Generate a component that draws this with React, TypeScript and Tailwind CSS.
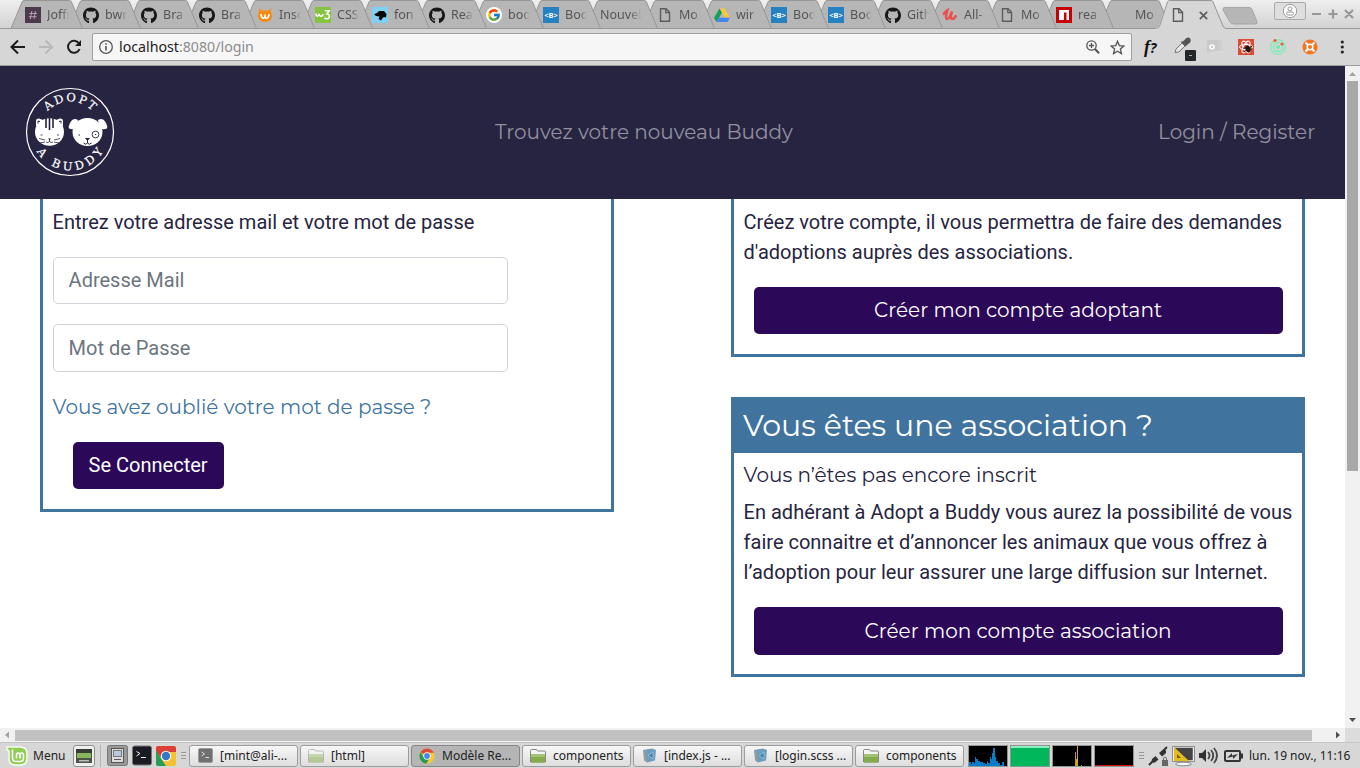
import type { ReactNode } from "react";
import { FaGithub } from "react-icons/fa";
import { FcGoogle } from "react-icons/fc";

const NOTO = "font-['Noto_Sans',sans-serif]";
const GEO = "font-['Montserrat','Inter',sans-serif] font-normal";

function PageIcon() {
  return (
    <svg width="12" height="16" viewBox="0 0 12 16" fill="none" stroke="#5c5c5c" strokeWidth="1.4">
      <path d="M1.5 1.7h5.6l3.4 3.6v8.9h-9z" />
      <path d="M6.8 1.9v3.7h3.6" />
    </svg>
  );
}

function Chrome({ size }: { size: number }) {
  return (
    <svg width={size} height={size} viewBox="0 0 20 20">
      <circle cx="10" cy="10" r="9.5" fill="#fbc82e" />
      <path d="M10 10 1.8 5.2A9.5 9.5 0 0 1 18.2 5.2L18.5 6H10z" fill="#dd4b3e" />
      <path d="M1.8 5.2A9.5 9.5 0 0 0 9.3 19.5L13.5 12 10 10 6.5 12z" fill="#26995a" />
      <circle cx="10" cy="10" r="4.6" fill="#fff" />
      <circle cx="10" cy="10" r="3.6" fill="#4688ee" />
    </svg>
  );
}

const Gh = () => <FaGithub size={17} color="#171717" />;
const Boot = () => (
  <svg width="16" height="16" viewBox="0 0 16 16">
    <rect width="16" height="16" fill="#2581c1" />
    <text x="8" y="10.8" fontFamily="Noto Sans" fontWeight="700" fontSize="7.5" fill="#fff" textAnchor="middle">&lt;B&gt;</text>
  </svg>
);
const Slack = () => (
  <svg width="16" height="16" viewBox="0 0 16 16">
    <rect width="16" height="16" fill="#4d394b" />
    <path d="M6.8 4 5.4 12M10.4 4 9 12M4.2 6.4h7.8M3.8 9.7h7.8" stroke="#b59fb3" strokeWidth="1" />
  </svg>
);
const Cat = () => (
  <svg width="16" height="16" viewBox="0 0 16 16">
    <path d="M2 1.500 5 3.500h6l3-2v3l1 4c0 4-3 6.500-7 6.500S1 12.500 1 8.500l1-4z" fill="#f58a15" />
    <path d="M4 7c0 5 3.500 5 4 2.500 0 2.500 4 2.500 4-2.500M8 7.500v2" fill="none" stroke="#fff" strokeWidth="1.500" />
  </svg>
);
const W3 = () => (
  <svg width="16" height="16" viewBox="0 0 16 16">
    <rect width="16" height="16" fill="#86c440" />
    <path d="M.8 6.500c.6 3.500 2.500 3.500 3.300.4.5 3 2.500 3.500 4.200.2M9.700 3.700h4.500L11.800 7c3.500 0 3.400 5-.2 4.700-1 0-1.700-.4-2.200-1" fill="none" stroke="#fff" strokeWidth="1.500" />
  </svg>
);
const Hound = () => (
  <svg width="16" height="16" viewBox="0 0 16 16">
    <rect width="16" height="16" fill="#7fd0f3" />
    <path d="M2 7.200 5 6l2-2h5l2.500 3-.5 3.500-2-.5-1.500 1L9 13.500l-2.500-1.500 1-2.500L4 9z" fill="#050505" />
  </svg>
);
const Google = () => (
  <span className="flex size-4 items-center justify-center rounded-full bg-white">
    <FcGoogle size={14} />
  </span>
);
const Drive = () => (
  <svg width="16" height="16" viewBox="0 0 16 16">
    <path d="M5.500 1.500h5L16 10.500h-5z" fill="#fdc73c" />
    <path d="M5.500 1.500 0 10.700 2.500 15 8 5.800z" fill="#15a05c" />
    <path d="M5.300 10.700H16L13.500 15h-11z" fill="#4387f5" />
  </svg>
);
const Udemy = () => (
  <svg width="16" height="16" viewBox="0 0 16 16">
    <path d="M1 7.500C3 6 4 4 5.500 3.200 4.500 6.500 2.800 12 5.200 12c2.300 0 3.600-5 4.800-7.500-1 3.500-2 7.500.2 7.500 1.600 0 3-1.700 4-3.800" fill="none" stroke="#ea5252" strokeWidth="2.500" />
  </svg>
);
const Npm = () => (
  <svg width="16" height="16" viewBox="0 0 16 16">
    <rect width="16" height="16" fill="#c80000" />
    <path d="M3 3h10v10h-2.500V5.500H8V13H3z" fill="#fff" />
  </svg>
);

const tabs: { icon: ReactNode; label: string }[] = [
  { icon: <Slack />, label: "Joffr" },
  { icon: <Gh />, label: "bwr" },
  { icon: <Gh />, label: "Bra" },
  { icon: <Gh />, label: "Bra" },
  { icon: <Cat />, label: "Inso" },
  { icon: <W3 />, label: "CSS" },
  { icon: <Hound />, label: "fon" },
  { icon: <Gh />, label: "Rea" },
  { icon: <Google />, label: "boo" },
  { icon: <Boot />, label: "Boo" },
  { icon: null, label: "Nouvel" },
  { icon: <PageIcon />, label: "Mo" },
  { icon: <Drive />, label: "wir" },
  { icon: <Boot />, label: "Boo" },
  { icon: <Boot />, label: "Boo" },
  { icon: <Gh />, label: "Gith" },
  { icon: <Udemy />, label: "All-" },
  { icon: <PageIcon />, label: "Mo" },
  { icon: <Npm />, label: "rea" },
  { icon: <span className="size-4" />, label: "Mo" },
];

function TabStrip() {
  return (
    <div className="flex h-[29px] shrink-0 bg-linear-to-b from-[#efefef] to-[#d2d2d2] pl-[11px]">
      {tabs.map((t, i) => (
        <div key={i} className={"relative h-[29px] shrink-0 " + (i < 5 ? "w-[58px]" : "w-[57px]")} style={{ zIndex: 30 - i }}>
          <svg className="absolute top-0 left-0" width="73" height="29" viewBox="0 0 73 29">
            <path d="M0 28.500 11 2q.7-1.500 2-1.500H58.500q1.500 0 2 1.500L71.500 28.500z" fill="#b6b6b6" stroke="#979797" />
          </svg>
          <div className="relative flex h-[29px] w-[57px] items-center gap-[6px] pt-px pl-[14px] text-[12.5px] text-[#555]">
            {t.icon && <span className="flex h-4 w-4 shrink-0 items-center justify-center">{t.icon}</span>}
            <span
              className={
                (t.icon ? "w-[22px] [mask-image:linear-gradient(to_right,black_65%,transparent)]" : "w-[42px] [mask-image:linear-gradient(to_right,black_70%,transparent)]") +
                " shrink-0 whitespace-nowrap"
              }
            >
              {t.label}
            </span>
          </div>
        </div>
      ))}
      <div className="relative z-40 h-[29px] w-[70px] shrink-0">
        <svg className="absolute top-0 left-0" width="72" height="29" viewBox="0 0 72 29">
          <path d="M0 29 0 28.500Q2 28 3 25L11.500 2q.7-1.500 2-1.500H55q1.500 0 2 1.500L67 26q1 2.500 3.500 2.500V29z" fill="#d6d6d6" />
          <path d="M1 28.500Q3 28 4 25L11.500 2q.7-1.500 2-1.500H55q1.500 0 2 1.500L67 26q1 2.500 3.500 2.500" fill="none" stroke="#979797" />
        </svg>
        <div className="relative flex h-[29px] items-center gap-[15px] pt-px pl-[16px]">
          <PageIcon />
          <svg width="9" height="9" viewBox="0 0 9 9" stroke="#5c5c5c" strokeWidth="1.700">
            <path d="M.8.8l7.400 7.400M8.200.8.8 8.200" />
          </svg>
        </div>
      </div>
      <svg className="-ml-[4px] shrink-0" width="36" height="29" viewBox="0 0 36 29">
        <path d="M2 7.500h25q2 0 3 2l5 12q.5 2.500-1.500 2.500H12q-3 0-4-2L1 10q-.5-2 1-2.500z" fill="#b6b6b6" stroke="#a5a5a5" />
      </svg>
      <div className="mt-[2px] ml-[16px] flex h-[18px] w-[32px] shrink-0 items-center justify-center rounded-[2px] border border-[#aaa] bg-[#dedede]">
        <svg width="16" height="16" viewBox="0 0 16 16" fill="#fff" stroke="#999">
          <circle cx="8" cy="8" r="6.700" />
          <circle cx="8" cy="5.800" r="2" />
          <rect x="4.500" y="9" width="7" height="3" rx="1.500" />
        </svg>
      </div>
      <svg className="mt-[8px] ml-[6px] shrink-0" width="44" height="12" viewBox="0 0 44 12" stroke="#989898" strokeWidth="2.200">
        <path d="M0 6h9M16.500 6h9M21 1.500v9M33 2l8 8M41 2l-8 8" />
      </svg>
    </div>
  );
}

function Toolbar() {
  return (
    <div className="relative z-0 -mt-px flex h-[38px] shrink-0 items-center border-y border-t-[#979797] border-b-[#9d9d9d] bg-[#d6d6d6]">
      <svg width="92" height="36" viewBox="0 0 92 36" fill="none" strokeWidth="2">
        <path d="M25 18H12M18 11.500 11.500 18l6.500 6.500" stroke="#1c1c1c" />
        <path d="M39 18h13M45.500 11.500 52 18l-6.500 6.500" stroke="#b9b9b9" />
        <path d="M79 14.500A6 6 0 1 0 79.600 20" stroke="#1c1c1c" />
        <path d="M81 11v6h-6z" fill="#1c1c1c" />
      </svg>
      <div className="flex h-[28px] w-[1040px] shrink-0 items-center rounded-[2px] border border-[#a0a0a0] bg-[#f6f6f6] pl-[6px]">
        <svg width="14" height="14" viewBox="0 0 14 14" fill="none" stroke="#555" strokeWidth="1.300">
          <circle cx="7" cy="7" r="6.300" />
          <path d="M7 6v4.500M7 3.200v1.500" strokeWidth="1.600" />
        </svg>
        <span className="ml-[6px] flex-1 text-[14.200px] text-[#8c8c8c]">
          <span className="text-[#222]">localhost</span>:8080/login
        </span>
        <svg className="mr-[10px]" width="42" height="16" viewBox="0 0 42 16" fill="none" stroke="#555" strokeWidth="1.300">
          <circle cx="6.500" cy="6.500" r="4.700" />
          <path d="M4 6.500h5M6.500 4v5" />
          <path d="m10 10 4 4.200" strokeWidth="2" />
        </svg>
        <svg className="-ml-[27px] mr-[6px]" width="15" height="15" viewBox="0 0 15 15" fill="none" stroke="#555" strokeWidth="1.300">
          <path d="m7.500 1.300 1.800 4.300 4.600.4-3.500 3.100 1 4.500-3.900-2.400-3.900 2.400 1-4.500L1.100 6l4.600-.4z" />
        </svg>
      </div>
      <span className="ml-[12px] w-[24px] shrink-0 font-['Liberation_Serif',serif] text-[18px] leading-none font-bold text-[#111] italic">
        f<span className="font-['Noto_Sans',sans-serif] text-[14px]">?</span>
      </span>
      <svg className="ml-[6px] shrink-0" width="186" height="30" viewBox="0 0 186 30">
        <path d="M1 20.500 2 17l6-6 3 3-6 6z" fill="#e6e6e6" stroke="#777" />
        <path d="m7.500 9.500 4.500 4.500M9 10.500l3.500-3.500q2-1.500 3 0t0 3L12 13" fill="#555" stroke="#555" strokeWidth="1.600" />
        <rect x="11" y="18" width="11" height="11" rx="1" fill="#22272c" />
        <path d="M15 23.500h3" stroke="#aaa" />
        <path d="M33 10q0-2 2-2h8q2 0 2 2v7q0 2-2 2h-7l-3 2z" fill="#c9c9c9" />
        <path d="M44 8h4v11l-3-1" fill="#cfcfcf" />
        <circle cx="38" cy="15" r="2" fill="none" stroke="#fff" strokeWidth="1.500" />
        <rect x="64" y="7" width="16" height="16" fill="#dc4a38" />
        <g fill="none" stroke="#fff">
          <ellipse cx="72" cy="15" rx="6.500" ry="2.600" />
          <ellipse cx="72" cy="15" rx="6.500" ry="2.600" transform="rotate(60 72 15)" />
          <ellipse cx="72" cy="15" rx="6.500" ry="2.600" transform="rotate(120 72 15)" />
        </g>
        <ellipse cx="74" cy="17" rx="2.500" ry="3.500" fill="#241511" transform="rotate(-25 74 17)" />
        <path d="m69 16 9 1M70 20l8-6" stroke="#241511" />
        <g fill="none" stroke="#78efb3" strokeWidth="1.300">
          <circle cx="104" cy="15" r="7.300" />
          <circle cx="104" cy="15" r="4.500" />
        </g>
        <circle cx="104" cy="15" r="2" fill="#66eda6" />
        <circle cx="101" cy="8.500" r="1.600" fill="#f65b36" />
        <circle cx="108" cy="12" r="1.600" fill="#f65b36" />
        <circle cx="136" cy="15" r="7.600" fill="#f47521" />
        <path d="m131.500 10.500 9 9M140.500 10.500l-9 9" stroke="#fff" strokeWidth="2.200" />
        <circle cx="136" cy="15" r="2.800" fill="#f47521" stroke="#fff" strokeWidth="1.500" />
        <g fill="#222">
          <circle cx="168.300" cy="10" r="1.600" />
          <circle cx="168.300" cy="15" r="1.600" />
          <circle cx="168.300" cy="20" r="1.600" />
        </g>
      </svg>
    </div>
  );
}

function Logo() {
  return (
    <svg width="90" height="90" viewBox="0 0 90 90" className="-mt-[2px] shrink-0">
      <defs>
        <path id="arc-top" d="M14.500 45a30.500 30.500 0 0 1 61 0" />
        <path id="arc-bottom" d="M6.500 45a38.500 38.500 0 0 0 77 0" />
      </defs>
      <circle cx="45" cy="45" r="43.500" fill="none" stroke="#fff" strokeWidth="1.200" />
      <g fontFamily="DejaVu Serif" fontSize="11.500" fill="#fff" stroke="#fff" strokeWidth=".2">
        <text textAnchor="middle" textLength="50">
          <textPath href="#arc-top" startOffset="50%">ADOPT</textPath>
        </text>
        <text textAnchor="middle" textLength="80">
          <textPath href="#arc-bottom" startOffset="50%">A BUDDY</textPath>
        </text>
      </g>
      <path d="M11 39V34q0-3 3-2.500l4 1.500h13l4-1.500q3-.5 3 2.500v5" fill="#fff" />
      <ellipse cx="24.500" cy="45" rx="14.500" ry="13.700" fill="#fff" />
      <path d="M13 36.500V34l2 .5M36 36.500V34l-2 .5" stroke="#272441" fill="none" />
      <path d="M21 31v10M24.500 31v12M28 31v10" stroke="#272441" strokeWidth="1.600" />
      <g stroke="#272441" strokeWidth=".8" fill="none">
        <path d="M15.500 48h2M32 48h2M24.500 52v3M21 55q2 1.500 3.500-.5 1.500 2 3.500.5M20 53l-6-1.500M20 55l-5 1M29 53l6-1.500M29 55l5 1" />
      </g>
      <path d="M23 51.500h3l-1.500 1.800z" fill="#272441" />
      <path d="M53 33q-5-3-8 3t1 6q4 1 6-4zM73 33q5-3 8 3t-1 6q-4 1-6-4z" fill="#fff" />
      <ellipse cx="62.500" cy="45" rx="15" ry="14" fill="#fff" />
      <circle cx="70.500" cy="47.500" r="3.400" fill="none" stroke="#272441" strokeWidth=".9" />
      <path d="M70 47.500h1.200M53.500 48h1.500M62.500 52v4M58.500 56q2.500 2.500 4 0 1.500 2.500 4 0" stroke="#272441" fill="none" />
      <path d="M60 51h5l-2.500 3z" fill="#272441" />
    </svg>
  );
}

function Page() {
  return (
    <div className="flex h-[662px] w-[1345px] flex-col overflow-hidden bg-white font-['Roboto',sans-serif] text-[20px] leading-[30px] text-[#272441]">
      <header className={`${GEO} flex h-[133px] shrink-0 items-center bg-[#272441] pl-[25px] text-[#93919f]`}>
        <Logo />
        <span className="-mt-[2px] ml-[380px] w-[663px] whitespace-nowrap">Trouvez votre nouveau Buddy</span>
        <span className="-mt-[2px] whitespace-nowrap">Login / Register</span>
      </header>
      <main className="flex items-start justify-between pr-[40px] pl-[40px]">
        <section className="h-[313px] w-[574px] border-3 border-t-0 border-[#41739f] pt-[8px] pl-[9.6px]">
          <p>Entrez votre adresse mail et votre mot de passe</p>
          <input className="mt-[20px] block h-[47px] w-[455px] rounded-[5px] border border-[#ced4da] px-[15px] pb-[2px] placeholder:text-[#6c757d]" placeholder="Adresse Mail" />
          <input className="mt-[20px] block h-[48px] w-[455px] rounded-[5px] border border-[#ced4da] px-[15px] placeholder:text-[#6c757d]" placeholder="Mot de Passe" />
          <a className={`${GEO} mt-[20px] block text-[#41739f]`}>Vous avez oublié votre mot de passe ?</a>
          <button className="mt-[20px] ml-[20px] block h-[47px] w-[151px] rounded-[5px] bg-[#2c0859] pb-[2px] text-white">Se Connecter</button>
        </section>
        <div className="flex w-[574px] flex-col gap-[40px]">
          <section className="h-[158px] border-3 border-t-0 border-[#41739f] pt-[8px] pl-[9.6px]">
            <p className="whitespace-nowrap">
              Créez votre compte, il vous permettra de faire des demandes
              <br />
              d'adoptions auprès des associations.
            </p>
            <button className={`${GEO} mt-[20px] ml-[10px] block h-[47px] w-[529px] rounded-[5px] bg-[#2c0859] pb-[2px] text-white`}>Créer mon compte adoptant</button>
          </section>
          <section className="h-[280px] border-3 border-t-0 border-[#41739f]">
            <h2 className={`${GEO} -mx-[3px] flex h-[56px] items-center bg-[#41739f] pt-[2px] pl-[12px] text-[30px] text-white`}>Vous êtes une association ?</h2>
            <h3 className={`${GEO} mt-[7px] pl-[9.6px]`}>Vous n’êtes pas encore inscrit</h3>
            <p className="mt-[7px] pl-[9.6px] whitespace-nowrap">
              En adhérant à Adopt a Buddy vous aurez la possibilité de vous
              <br />
              faire connaitre et d’annoncer les animaux que vous offrez à
              <br />
              l’adoption pour leur assurer une large diffusion sur Internet.
            </p>
            <button className={`${GEO} mt-[20px] ml-[19.6px] block h-[48px] w-[529px] rounded-[5px] bg-[#2c0859] text-white`}>Créer mon compte association</button>
          </section>
        </div>
      </main>
    </div>
  );
}

const Folder = ({ faded }: { faded?: boolean }) => (
  <svg width="16" height="14" viewBox="0 0 16 14" className={faded ? "opacity-50" : ""}>
    <path d="M.5 13V1.500q0-1 1-1h5l1 1.500h7q1 0 1 1V13z" fill="#f4f4f4" stroke="#888" />
    <path d="M1 5h14v8.500H1z" fill="#83ad4a" />
    <path d="M1 5h14v3H1z" fill="#9fc273" />
  </svg>
);
const Term = () => (
  <svg width="15" height="15" viewBox="0 0 15 15">
    <rect x=".5" y=".5" width="14" height="14" rx="1.500" fill="#707070" stroke="#9b9b9b" />
    <path d="m3.500 4 3 2-3 2M7.500 9.500H11" stroke="#ddd" fill="none" />
  </svg>
);
const Code = () => (
  <svg width="15" height="15" viewBox="0 0 15 15">
    <path d="m1 2 9-1.500 4 1.500-1 10.500-8 2z" fill="#6d9dbd" />
    <path d="m1 2 3 1 1 11.500-3-2z" fill="#939ba0" />
    <path d="m11 4-5 3.500 5 3.500z" fill="#4382a8" stroke="#8fc2dc" strokeWidth=".9" />
  </svg>
);

const windows: { icon: ReactNode; label: string; active?: boolean }[] = [
  { icon: <Term />, label: "[mint@ali-..." },
  { icon: <Folder faded />, label: "[html]" },
  { icon: <Chrome size={16} />, label: "Modèle Re...", active: true },
  { icon: <Folder />, label: "components" },
  { icon: <Code />, label: "[index.js - ..." },
  { icon: <Code />, label: "[login.scss ..." },
  { icon: <Folder />, label: "components" },
];

function Grip() {
  return (
    <svg width="5" height="9" viewBox="0 0 5 9" className="shrink-0" stroke="#999">
      <path d="M0 1.500h5M0 4.500h5M0 7.500h5" />
    </svg>
  );
}

function Taskbar() {
  return (
    <footer className="flex h-[26px] shrink-0 items-center border-t border-[#c6c6c6] bg-[#d7d7d7] pl-[6px] text-[12px] text-[#222]">
      <svg width="22" height="20" viewBox="0 0 22 20" className="shrink-0">
        <path d="M.5 1H14q7 0 7 7v4q0 7-7 7h-4q-7 0-7-6V5Q.5 4.500.5 1z" fill="#8fce55" stroke="#f7fbf2" strokeWidth="1.500" />
        <path d="M6.500 3.500V12q0 3.500 3.500 3.500h4q3.500 0 3.500-3.500V9q0-2-1.800-2T14 9v3.500M14 9q0-2-1.700-2T10.500 9v3.500" fill="none" stroke="#fff" strokeWidth="1.600" />
      </svg>
      <span className="ml-[5px] w-[40px] shrink-0">Menu</span>
      <span className="flex h-[22px] w-[22px] shrink-0 items-center justify-center rounded-[3px] border border-[#8e8e8e] bg-[#efefef]">
        <svg width="16" height="14" viewBox="0 0 16 14">
          <rect width="16" height="14" fill="#4c5549" />
          <path d="M0 0h16v4H0z" fill="#343c33" />
          <path d="M1 4h14v5H1z" fill="#88b65a" />
          <path d="M3 11h10v1.500H3z" fill="#bbb" />
        </svg>
      </span>
      <span className="ml-[5px] h-[22px] w-px shrink-0 bg-[#b4b4b4]" />
      <svg width="70" height="22" viewBox="0 0 70 22" className="ml-[6px] shrink-0">
        <rect x=".5" y=".5" width="20" height="20" rx="2" fill="#999" stroke="#777" />
        <rect x="4.500" y="3.500" width="12" height="14" fill="#ddd" stroke="#555" />
        <rect x="6.500" y="5.500" width="8" height="6" fill="#b7cadd" stroke="#777" />
        <path d="M7 14.500h7" stroke="#555" />
        <rect x="25.500" y="1" width="19" height="19" rx="2" fill="#1b1b24" stroke="#777" />
        <path d="m29.500 6.500 3.500 2-3.500 2.500M34 12.500h5" stroke="#eee" fill="none" />
        <rect x="49" y="1" width="20" height="20" rx="2" fill="#f6c232" />
        <path d="M49 7V3q0-2 2-2h16q2 0 2 2v4H59l-4 6z" fill="#dd3e35" />
        <path d="m49 5 6 10 4 6h-8q-2 0-2-2z" fill="#2b9b58" />
        <circle cx="59" cy="11" r="5.200" fill="#fff" />
        <circle cx="59" cy="11" r="4.200" fill="#3478c6" />
      </svg>
      <span className="mr-[3px] ml-[4px] flex">
        <Grip />
      </span>
      <div className="flex shrink-0 gap-[2px]">
        {windows.map((w, i) => (
          <div
            key={i}
            className={
              "flex h-[22px] w-[109px] items-center rounded-[3px] border pl-[7px] " +
              (w.active ? "border-[#868686] bg-[#b5b5b5]" : "border-[#9d9d9d] bg-linear-to-b from-[#f7f7f7] to-[#dedede]")
            }
          >
            <span className="flex w-4 shrink-0 justify-center">{w.icon}</span>
            <span className="ml-[7px] whitespace-nowrap">{w.label}</span>
          </div>
        ))}
      </div>
      <svg width="166" height="22" viewBox="0 0 166 22" className="ml-[4px] shrink-0">
        <g fill="#000" stroke="#949494">
          <rect x=".5" y=".5" width="39" height="21" />
          <rect x="42.500" y=".5" width="39" height="21" fill="#00b75b" />
          <rect x="84.500" y=".5" width="39" height="21" />
          <rect x="126.500" y=".5" width="39" height="21" />
        </g>
        <path d="M1 21v-4h2v2h1v-2h2v1h1v-6h1v2h2v2h2v1h3v1h2v1h2v-3h1v2h2v-6h1v2h1v-6h1V3h2v9h1v4h2v2h2v2h2v-3h2v4z" fill="#087bc9" />
        <path d="M43 1h38v2H43z" fill="#8eeec2" />
        <rect x="107" y="7" width="1" height="14" fill="#c8a000" />
        <rect x="108" y="14" width="1" height="7" fill="#c8a000" />
        <rect x="109" y="1" width="1" height="20" fill="#d8ad00" />
        <rect x="113" y="20" width="1" height="1" fill="#c8a000" />
        <path d="M127 20.500h38" stroke="#d00e0e" />
      </svg>
      <span className="ml-[5px] flex">
        <Grip />
      </span>
      <svg width="98" height="24" viewBox="0 0 98 24" className="ml-[3px] shrink-0">
        <path d="m2 21 5-5M15 8l5-5" stroke="#333" strokeWidth="2" />
        <path d="m5 15 3.500-3 3 3.500-3.500 3q-3 .5-3.500-1zM12 9l3.500-3q3-1 3.500 1t-1 3l-3 2.500z" fill="#333" />
        <rect x="15" y="16" width="6" height="6" fill="#666" />
        <path d="M16.500 16v-2q1.500-2 3 0v2" fill="none" stroke="#666" />
        <rect x="26.500" y="3" width="20" height="14" fill="#444" stroke="#eee" strokeWidth="1.500" />
        <path d="M27 3v14h15z" fill="#e2bd1d" />
        <path d="M30 10v4h4z" fill="#766314" />
        <path d="M25.500 2.500h22v15h-22z" fill="none" stroke="#777" strokeWidth=".8" />
        <ellipse cx="36.500" cy="20" rx="8" ry="1.800" fill="#f5f5f5" stroke="#888" />
        <path d="M52 9h3l4-4v13l-4-4h-3z" fill="#333" />
        <path d="M61 8q3 3.500 0 7M64 6q4.500 5.500 0 11M67 4q6 7.500 0 15" fill="none" stroke="#444" strokeWidth="1.700" />
        <rect x="78" y="7" width="15" height="10" rx="1" fill="#d7d7d7" stroke="#333" strokeWidth="2" />
        <path d="M94 9.500h2v5h-2z" fill="#333" />
        <path d="m80 14 5-5v2.500l6-1.500-5 5v-2.500z" fill="#333" />
      </svg>
      <span className="ml-[4px] whitespace-nowrap">lun. 19 nov., 11:16</span>
    </footer>
  );
}

export default function App() {
  return (
    <div className={`${NOTO} flex h-[768px] w-[1360px] flex-col overflow-hidden bg-[#d6d6d6]`}>
      <TabStrip />
      <Toolbar />
      <div className="flex h-[662px] shrink-0">
        <Page />
        <div className="flex w-[15px] flex-col items-center justify-between bg-[#f1f1f1]">
          <svg width="15" height="15" viewBox="0 0 15 15">
            <path d="M4 10h7L7.500 6z" fill="#a3a3a3" />
          </svg>
          <span className="h-[390px] w-[11px] bg-[#a8a8a8]" />
          <span className="flex-1" />
          <svg width="15" height="15" viewBox="0 0 15 15">
            <path d="M4 5h7L7.500 9z" fill="#505050" />
          </svg>
        </div>
      </div>
      <div className="flex h-[14px] shrink-0 items-center bg-[#f1f1f1]">
        <svg width="15" height="14" viewBox="0 0 15 14">
          <path d="M9 3.500v7L5 7z" fill="#a3a3a3" />
        </svg>
        <span className="h-[11px] w-[1297px] bg-[#c1c1c1]" />
        <span className="flex-1" />
        <svg width="15" height="14" viewBox="0 0 15 14">
          <path d="M6 3.500v7L10 7z" fill="#505050" />
        </svg>
        <span className="h-[14px] w-[15px] bg-[#dcdcdc]" />
      </div>
      <Taskbar />
    </div>
  );
}
